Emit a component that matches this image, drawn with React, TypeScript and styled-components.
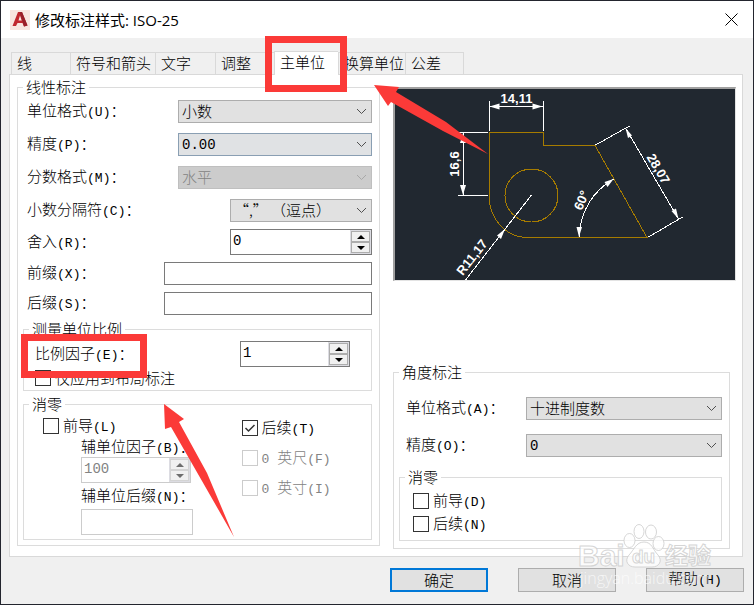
import React, { useState } from 'react';
import styled, { createGlobalStyle } from 'styled-components';

const GlobalStyle = createGlobalStyle`
  * { box-sizing: border-box; }
  body {
    margin: 0;
    background: #f0f0f0;
    color: #000;
    font: 300 15px/18px "Noto Sans CJK SC", sans-serif;
  }
  button, input, select { font: inherit; color: inherit; margin: 0; border-radius: 0; }
`;

const Window = styled.div`
  position: relative;
  display: flex;
  flex-direction: column;
  min-height: 100vh;
  border: 1px solid #23252e;
  background: #f0f0f0;
`;

const TitleBar = styled.header`
  display: flex;
  align-items: center;
  gap: 5px;
  height: 37px;
  padding: 0 12px 0 9px;
  background: #fff;
`;

const Title = styled.h1`
  flex: 1;
  margin: 0;
  font: 400 15px/20px "Open Sans", "Noto Sans CJK SC", sans-serif;
`;

const CloseButton = styled.button`
  display: flex;
  padding: 3px;
  border: 0;
  background: none;
`;

const TabList = styled.div`
  display: flex;
  align-items: flex-end;
  height: 36px;
  padding-left: 10px;
`;

const Tab = styled.button<{ $width: number; $active?: boolean }>`
  width: ${(p) => p.$width}px;
  height: ${(p) => (p.$active ? 24 : 22)}px;
  margin-bottom: ${(p) => (p.$active ? -1 : 0)}px;
  padding: 0 5px ${(p) => (p.$active ? 3 : 2)}px;
  border: 1px solid #d9d9d9;
  border-right-width: 0;
  border-bottom: 0;
  background: ${(p) => (p.$active ? '#fff' : '#f0f0f0')};
  text-align: left;
  white-space: nowrap;
  z-index: ${(p) => (p.$active ? 1 : 0)};
  &:last-child { border-right-width: 1px; }
`;

const Panel = styled.main`
  display: grid;
  grid-template-columns: minmax(0, 363fr) minmax(0, 343fr);
  gap: 13px;
  margin: 0 10px 0 8px;
  padding: 4px 6px 7px 7px;
  border: 1px solid #d9d9d9;
  background: #fff;
`;

const Group = styled.fieldset`
  min-width: 0;
  margin: 0;
  padding: 0;
  border: 1px solid #dcdcdc;
`;

const Legend = styled.legend`
  margin-left: 5px;
  padding: 0 3px;
  line-height: 16px;
`;

const LinearGroup = styled(Group)`
  margin-bottom: 3px;
`;

const LinearBody = styled.div`
  padding: 0 7px 5px 5px;
`;

const ScaleGroup = styled(Group)`
  margin-top: 3px;
`;

const ScaleBody = styled.div`
  padding: 1px 21px 4px 11px;
`;

const ZeroGroup = styled(Group)`
  margin-top: 5px;
`;

const ZeroBody = styled.div`
  display: grid;
  grid-template-columns: 198fr 129fr;
  padding: 6px 0 4px 19px;
`;

const RightColumn = styled.div`
  display: flex;
  flex-direction: column;
  justify-content: space-between;
  gap: 20px;
  padding-top: 8px;
`;

const AngleGroup = styled(Group)`
  margin-right: 6px;
`;

const AngleBody = styled.div`
  padding: 10px 7px 7px 5px;
`;

const AngleZeroGroup = styled(Group)`
  margin-top: 5px;
`;

const AngleZeroBody = styled.div`
  display: flex;
  flex-direction: column;
  gap: 7px;
  padding: 8px 13px;
`;

const Row = styled.div<{ $height: number }>`
  display: flex;
  align-items: center;
  justify-content: space-between;
  height: ${(p) => p.$height}px;
  padding-left: 4px;
`;

const ScaleRow = styled(Row)`
  padding-left: 0;
`;

const AngleRow = styled(Row)`
  padding-left: 7px;
`;

const Key = styled.span`
  font-family: "Liberation Mono", monospace;
  font-size: 13px;
`;

const SelectBox = styled.span<{ $width: number }>`
  position: relative;
  display: flex;
  width: ${(p) => p.$width}px;
  svg { position: absolute; right: 5px; top: 8px; pointer-events: none; }
`;

const Select = styled.select<{ $focus?: boolean; $mono?: boolean }>`
  appearance: none;
  width: 100%;
  height: 23px;
  padding: ${(p) => (p.$mono ? '1px 3px 0' : '0 3px 1px')};
  border: 1px solid ${(p) => (p.$focus ? '#8a9fb3' : '#adadad')};
  background: ${(p) => (p.$focus ? '#e0e2e4' : '#e1e1e1')};
  font-family: ${(p) => (p.$mono ? '"Liberation Mono", monospace' : 'inherit')};
  font-size: ${(p) => (p.$mono ? 14 : 15)}px;
  &:disabled { background: #ccc; border-color: #bfbfbf; color: #838383; opacity: 1; }
`;

const TextBox = styled.input<{ $width: number; $height?: number; $soft?: boolean }>`
  width: ${(p) => p.$width}px;
  height: ${(p) => p.$height ?? 23}px;
  padding: 0 3px;
  border: 1px solid ${(p) => (p.$soft ? '#ccc' : '#7a7a7a')};
  background: #fff;
`;

const SpinBox = styled.span<{ $width: number; $disabled?: boolean }>`
  display: flex;
  width: ${(p) => p.$width}px;
  height: 26px;
  border: 1px solid ${(p) => (p.$disabled ? '#ccc' : '#7a7a7a')};
  background: #fff;
`;

const SpinInput = styled.input`
  flex: 1;
  min-width: 0;
  padding: 0 2px 2px;
  border: 0;
  background: none;
  font-family: "Liberation Mono", monospace;
  font-size: 14px;
  &:disabled { color: #838383; }
`;

const SpinButtons = styled.span`
  display: grid;
  grid-template-rows: 1fr 1fr;
  width: 21px;
  padding: 1px;
  background: #dcdce2;
`;

const SpinButton = styled.button`
  display: flex;
  align-items: center;
  justify-content: center;
  min-height: 0;
  padding: 0;
  border: 1px solid #adadad;
  background: #f0f0f0;
  color: #000;
  &:disabled { border-color: #d4d4d4; color: #6d6d6d; }
`;

const CheckLabel = styled.label<{ $disabled?: boolean }>`
  display: flex;
  align-items: center;
  gap: 4px;
  height: 16px;
  white-space: nowrap;
  color: ${(p) => (p.$disabled ? '#838383' : '#000')};
`;

const CheckBox = styled.input`
  appearance: none;
  flex: none;
  width: 16px;
  height: 16px;
  border: 1px solid #333;
  background: #fff;
  &:disabled { border-color: #ccc; }
  &:checked {
    background: #fff url("data:image/svg+xml,%3Csvg xmlns='http://www.w3.org/2000/svg' viewBox='0 0 14 14'%3E%3Cpath d='M2.5 7l3 3 6-6' fill='none' stroke='%23333' stroke-width='1.5'/%3E%3C/svg%3E");
  }
`;

const SubUnits = styled.div`
  display: flex;
  flex-direction: column;
`;

const SubFields = styled.div`
  display: grid;
  grid-template-rows: 19px 26px 26px 26px;
  justify-items: start;
  padding: 4px 0 0 38px;
`;

const CheckColumn = styled.div`
  display: flex;
  flex-direction: column;
  gap: 14px;
  padding-top: 2px;
`;

const SubLabel = styled.label`
  align-self: center;
`;

const Preview = styled.div`
  display: flex;
  border: 2px solid #a0a0a0;
  border-right: 1px solid #e3e3e3;
  border-bottom: 1px solid #e3e3e3;
  background: #212830;
  svg { width: 100%; height: 191px; }
`;

const Footer = styled.footer`
  display: flex;
  justify-content: flex-end;
  gap: 30px;
  padding: 11px 9px 12px;
`;

const PushButton = styled.button<{ $primary?: boolean }>`
  width: 98px;
  height: 24px;
  padding: 0 0 1px;
  border: ${(p) => (p.$primary ? '2px solid #0078d7' : '1px solid #adadad')};
  background: #e1e1e1;
`;

const Overlay = styled.svg`
  position: absolute;
  top: -1px;
  left: -1px;
  pointer-events: none;
  z-index: 2;
`;

type TextProps = { text: string; hotkey?: string; colon?: boolean };

function Caption({ text, hotkey, colon }: TextProps) {
  return (
    <span>
      {text}
      {hotkey && <Key>({hotkey})</Key>}
      {colon && '：'}
    </span>
  );
}

function Chevron({ color = '#505050' }: { color?: string }) {
  return (
    <svg width="11" height="7" viewBox="0 0 11 7" fill="none" stroke={color}>
      <path d="M1 1l4.5 4.5L10 1" />
    </svg>
  );
}

type DropProps = {
  id: string;
  value: string;
  width: number;
  disabled?: boolean;
  focus?: boolean;
  mono?: boolean;
};

function Drop({ id, value, width, disabled, focus, mono }: DropProps) {
  return (
    <SelectBox $width={width}>
      <Select id={id} disabled={disabled} $focus={focus} $mono={mono}>
        <option>{value}</option>
      </Select>
      <Chevron color={disabled ? '#a8a8a8' : undefined} />
    </SelectBox>
  );
}

type SpinProps = { id: string; initial: number; width: number; disabled?: boolean };

function Spin({ id, initial, width, disabled }: SpinProps) {
  const [value, setValue] = useState(String(initial));
  const step = (by: number) => setValue(String((Number(value) || 0) + by));
  return (
    <SpinBox $width={width} $disabled={disabled}>
      <SpinInput id={id} value={value} disabled={disabled} onChange={(e) => setValue(e.target.value)} />
      <SpinButtons>
        <SpinButton type="button" aria-label="增加" disabled={disabled} onClick={() => step(1)}>
          <svg width="8" height="4" fill="currentColor"><path d="M0 4l4-4 4 4z" /></svg>
        </SpinButton>
        <SpinButton type="button" aria-label="减少" disabled={disabled} onClick={() => step(-1)}>
          <svg width="8" height="4" fill="currentColor"><path d="M0 0h8L4 4z" /></svg>
        </SpinButton>
      </SpinButtons>
    </SpinBox>
  );
}

type CheckProps = { text: string; hotkey?: string; prefix?: string; checked?: boolean; disabled?: boolean };

function Check({ text, hotkey, prefix, checked, disabled }: CheckProps) {
  return (
    <CheckLabel $disabled={disabled}>
      <CheckBox type="checkbox" defaultChecked={checked} disabled={disabled} />
      <span>
        {prefix && <Key>{prefix}&nbsp;</Key>}
        <Caption text={text} hotkey={hotkey} />
      </span>
    </CheckLabel>
  );
}

function AppIcon() {
  return (
    <svg width="20" height="20" viewBox="0 0 20 20">
      <rect width="20" height="20" fill="#f8e6e0" />
      <path fillRule="evenodd" d="M2.500 16L8 2h4l5.500 13.500-3.500 1-1.500-3.500H7.500L6 16zM8.500 10.500h3.200L10 5.500z" fill="#c0282f" />
      <path d="M9.500 2H12l5.500 13.500-3.500 1z" fill="#98202a" />
    </svg>
  );
}

function Drawing() {
  return (
    <svg viewBox="395 89 339 191" role="img" aria-label="标注预览">
      <g fill="none" stroke="#a67c00" shapeRendering="crispEdges">
        <path d="M488.500 196V132.500H542.500V145.500H594.500L646.500 237.500H527A38.500 41.500 0 0 1 488.500 196" />
        <circle cx="531" cy="195.500" r="26.500" />
      </g>
      <g fill="none" stroke="#fff" shapeRendering="crispEdges">
        <path d="M488.500 101V131M542.500 101V131M489 106.500H542M457 132.500H487M457 195.500H487M462.500 133V195" />
        <path d="M595 145L629 126M648 237L682 217M625 128L678 219" />
        <path d="M531 195L465 280M578.500 237Q581 198 613 179" />
      </g>
      <g fill="#fff">
        <path d="M489 106.500l10-3v6zM542 106.500l-10-3v6zM462.500 133l-3 10h6zM462.500 195l-3-10h6z" />
        <path d="M625 128l2.500 10 4-2.500zM678 219l-7-8 4.500-2.500zM504.500 229l-4 10-4-3.500zM578.500 237l-2.500-10h5.500zM613 179l-9 3 3 5z" />
      </g>
      <g fill="#fff" fontFamily="Liberation Sans, sans-serif" fontWeight="700" fontSize="13" textAnchor="middle">
        <text x="516" y="103">14,11</text>
        <text transform="translate(458 164) rotate(-90)">16,6</text>
        <text transform="translate(654 171) rotate(60)">28,07</text>
        <text transform="translate(585 202) rotate(-67)">60°</text>
        <text transform="translate(475 260) rotate(-52)">R11,17</text>
      </g>
    </svg>
  );
}

function Annotations() {
  return (
    <Overlay width="754" height="605" viewBox="0 0 754 605" aria-hidden="true">
      <g fill="none" stroke="#fb3a38" strokeWidth="7">
        <rect x="268.500" y="39.500" width="75" height="49" />
        <rect x="24.500" y="337.500" width="119" height="37" />
      </g>
      <g fill="#fb3a38">
        <path d="M374 85L399 87 396 92 446 122 488 154 443 131 391 102 388 106z" />
        <path d="M164 404L184 419 179 422 207 473 234 537 202 481 171 427 165 429z" />
      </g>
      <g fill="#fff" fillOpacity="0.75" stroke="#c8c8c8" strokeOpacity="0.75">
        <ellipse cx="629.500" cy="540.500" rx="5.500" ry="7" />
        <ellipse cx="639" cy="531.500" rx="5" ry="7" />
        <ellipse cx="651" cy="532" rx="5.500" ry="7" />
        <ellipse cx="658.500" cy="543.500" rx="5.500" ry="7" />
        <path d="M644 542c8 0 9 8 14 13 5 6 1 12-6 12h-17c-7 0-11-6-6-12 5-5 7-13 15-13z" />
        <g fontFamily="Liberation Sans, sans-serif" fontWeight="700">
          <text x="578" y="566" fontSize="30">Bai</text>
          <text x="632" y="563" fontSize="19">du</text>
          <text x="665" y="564" fontSize="23" fontFamily="Noto Sans CJK SC, sans-serif">经验</text>
        </g>
      </g>
      <text x="580" y="584" fontSize="16" fill="#fff" fillOpacity="0.7" fontFamily="Open Sans, sans-serif">jingyan.baidu.com</text>
    </Overlay>
  );
}

export default function App() {
  return (
    <>
      <GlobalStyle />
      <Window>
        <TitleBar>
          <AppIcon />
          <Title>修改标注样式: ISO-25</Title>
          <CloseButton type="button" aria-label="关闭">
            <svg width="13" height="13" stroke="#000" fill="none"><path d="M.5.5l12 12M12.500.5l-12 12" /></svg>
          </CloseButton>
        </TitleBar>
        <TabList role="tablist">
          <Tab role="tab" $width={59}>线</Tab>
          <Tab role="tab" $width={85}>符号和箭头</Tab>
          <Tab role="tab" $width={60}>文字</Tab>
          <Tab role="tab" $width={59}>调整</Tab>
          <Tab role="tab" $width={64} $active aria-selected>主单位</Tab>
          <Tab role="tab" $width={67}>换算单位</Tab>
          <Tab role="tab" $width={59}>公差</Tab>
        </TabList>
        <Panel>
          <LinearGroup>
            <Legend>线性标注</Legend>
            <LinearBody>
              <Row $height={33}>
                <label htmlFor="unit"><Caption text="单位格式" hotkey="U" colon /></label>
                <Drop id="unit" value="小数" width={194} />
              </Row>
              <Row $height={33}>
                <label htmlFor="precision"><Caption text="精度" hotkey="P" colon /></label>
                <Drop id="precision" value="0.00" width={194} focus mono />
              </Row>
              <Row $height={33}>
                <label htmlFor="fraction"><Caption text="分数格式" hotkey="M" colon /></label>
                <Drop id="fraction" value="水平" width={194} disabled />
              </Row>
              <Row $height={32}>
                <label htmlFor="separator"><Caption text="小数分隔符" hotkey="C" colon /></label>
                <Drop id="separator" value="“,” （逗点）" width={142} />
              </Row>
              <Row $height={32}>
                <label htmlFor="round"><Caption text="舍入" hotkey="R" colon /></label>
                <Spin id="round" initial={0} width={142} />
              </Row>
              <Row $height={30}>
                <label htmlFor="prefix"><Caption text="前缀" hotkey="X" colon /></label>
                <TextBox id="prefix" $width={208} />
              </Row>
              <Row $height={30}>
                <label htmlFor="suffix"><Caption text="后缀" hotkey="S" colon /></label>
                <TextBox id="suffix" $width={208} />
              </Row>
              <ScaleGroup>
                <Legend>测量单位比例</Legend>
                <ScaleBody>
                  <ScaleRow $height={32}>
                    <label htmlFor="scale"><Caption text="比例因子" hotkey="E" colon /></label>
                    <Spin id="scale" initial={1} width={110} />
                  </ScaleRow>
                  <Check text="仅应用到布局标注" />
                </ScaleBody>
              </ScaleGroup>
              <ZeroGroup>
                <Legend>消零</Legend>
                <ZeroBody>
                  <SubUnits>
                    <Check text="前导" hotkey="L" />
                    <SubFields>
                      <SubLabel htmlFor="subfactor"><Caption text="辅单位因子" hotkey="B" colon /></SubLabel>
                      <Spin id="subfactor" initial={100} width={110} disabled />
                      <SubLabel htmlFor="subsuffix"><Caption text="辅单位后缀" hotkey="N" colon /></SubLabel>
                      <TextBox id="subsuffix" $width={112} $height={26} $soft disabled />
                    </SubFields>
                  </SubUnits>
                  <CheckColumn>
                    <Check text="后续" hotkey="T" checked />
                    <Check prefix="0" text="英尺" hotkey="F" disabled />
                    <Check prefix="0" text="英寸" hotkey="I" disabled />
                  </CheckColumn>
                </ZeroBody>
              </ZeroGroup>
            </LinearBody>
          </LinearGroup>
          <RightColumn>
            <Preview><Drawing /></Preview>
            <AngleGroup>
              <Legend>角度标注</Legend>
              <AngleBody>
                <AngleRow $height={37}>
                  <label htmlFor="angleunit"><Caption text="单位格式" hotkey="A" colon /></label>
                  <Drop id="angleunit" value="十进制度数" width={196} />
                </AngleRow>
                <AngleRow $height={37}>
                  <label htmlFor="angleprecision"><Caption text="精度" hotkey="O" colon /></label>
                  <Drop id="angleprecision" value="0" width={196} mono />
                </AngleRow>
                <AngleZeroGroup>
                  <Legend>消零</Legend>
                  <AngleZeroBody>
                    <Check text="前导" hotkey="D" />
                    <Check text="后续" hotkey="N" />
                  </AngleZeroBody>
                </AngleZeroGroup>
              </AngleBody>
            </AngleGroup>
          </RightColumn>
        </Panel>
        <Footer>
          <PushButton type="button" $primary>确定</PushButton>
          <PushButton type="button">取消</PushButton>
          <PushButton type="button">帮助<Key>(H)</Key></PushButton>
        </Footer>
        <Annotations />
      </Window>
    </>
  );
}
